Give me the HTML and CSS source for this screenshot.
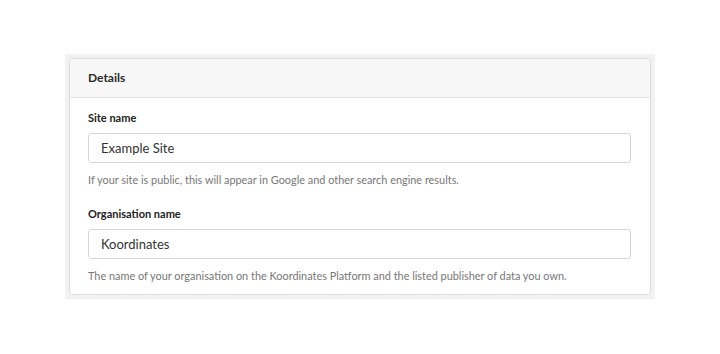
FILE: index.html
```html
<!DOCTYPE html>
<html lang="en">
<head>
    <meta charset="UTF-8">
    <meta name="viewport" content="width=device-width, initial-scale=1.0">
    <title>Site settings</title>
    <link rel="stylesheet" href="styles.css">
</head>
<body>
    <div class="frame">
        <div class="card">
            <div class="card-header">Details</div>
            <div class="card-body">
                <div class="field">
                    <label class="field-label" for="siteName">Site name</label>
                    <input class="field-input" id="siteName" type="text" value="Example Site">
                    <p class="field-help">If your site is public, this will appear in Google and other search engine results.</p>
                </div>
                <div class="field">
                    <label class="field-label" for="orgName">Organisation name</label>
                    <input class="field-input" id="orgName" type="text" value="Koordinates">
                    <p class="field-help">The name of your organisation on the Koordinates Platform and the listed publisher of data you own.</p>
                </div>
            </div>
        </div>
    </div>
</body>
</html>
```

FILE: styles.css
```css
* {
    margin: 0;
    padding: 0;
    box-sizing: border-box;
}

body {
    font-family: Lato, 'Open Sans', sans-serif;
    background: white;
    color: #333;
    padding: 54px 65px 0;
}

.frame {
    background: #f2f2f2;
    padding: 4px;
    width: 590px;
}

.card {
    background: white;
    border: 1px solid #dddddd;
    border-radius: 3px;
}

.card-header {
    background: #f7f7f7;
    border-bottom: 1px solid #e2e2e2;
    height: 39px;
    line-height: 38px;
    padding: 0 18px;
    font-size: 12px;
    font-weight: 700;
    color: #2b2b2b;
    border-radius: 3px 3px 0 0;
}

.card-body {
    padding: 12px 19px 10px 18px;
}

.field + .field {
    margin-top: 18px;
}

.field-label {
    display: block;
    font-size: 11px;
    font-weight: 700;
    line-height: 16px;
    color: #222;
    margin-bottom: 7px;
}

.field-input {
    display: block;
    width: 100%;
    height: 30px;
    border: 1px solid #d6d6d6;
    border-radius: 3px;
    padding: 0 12px;
    font-family: inherit;
    font-size: 13px;
    color: #333;
    background: white;
}

.field-help {
    margin-top: 9px;
    font-size: 10.9px;
    line-height: 16px;
    color: #777;
}
```
